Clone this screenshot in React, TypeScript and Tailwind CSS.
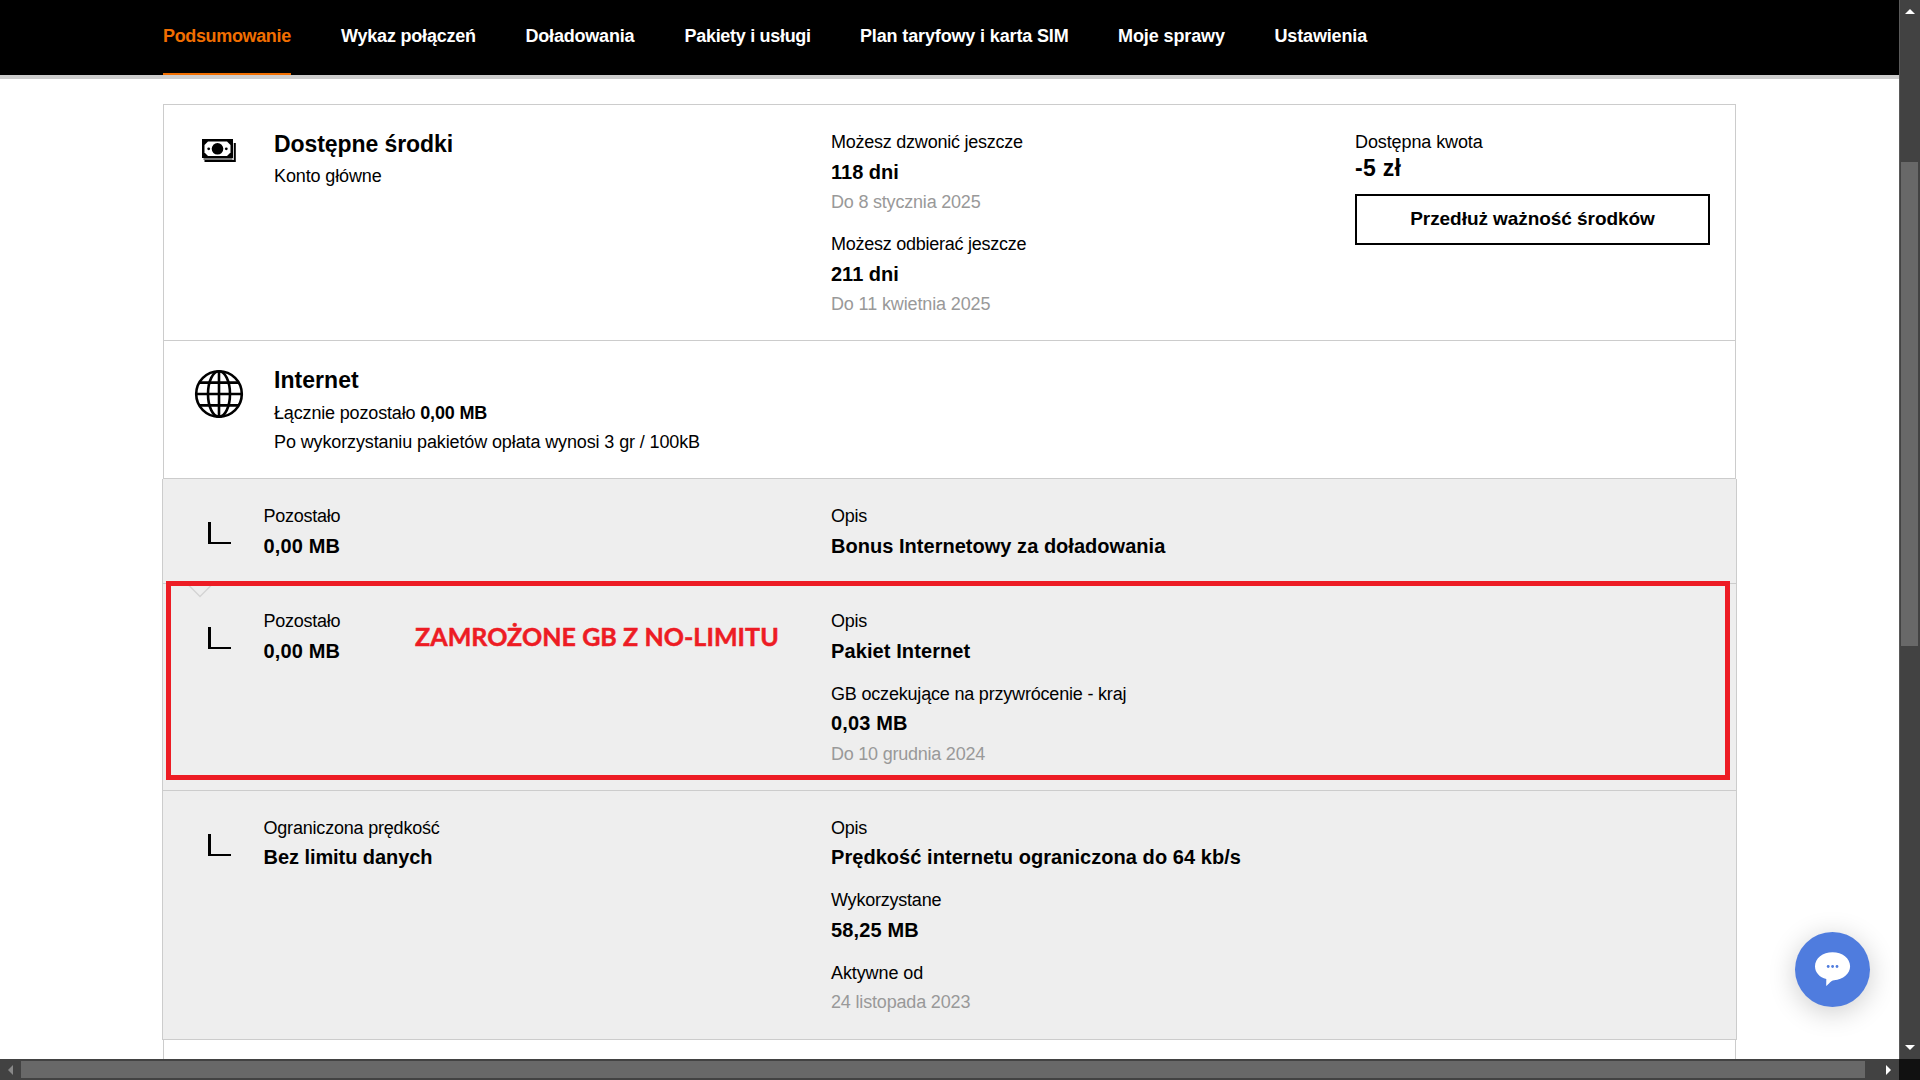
import type { ReactNode } from "react"

const navItems = [
  { label: "Podsumowanie", size: "w-[128px] tracking-[-0.35px]", active: true },
  { label: "Wykaz połączeń", size: "w-[134.5px] tracking-[-0.2px]" },
  { label: "Doładowania", size: "w-[109px] tracking-[-0.2px]" },
  { label: "Pakiety i usługi", size: "w-[125.5px] tracking-[-0.3px]" },
  { label: "Plan taryfowy i karta SIM", size: "w-[208px] tracking-[-0.14px]" },
  { label: "Moje sprawy", size: "w-[106.5px] tracking-[-0.1px]" },
  { label: "Ustawienia", size: "w-[93px] tracking-[-0.15px]" },
]

interface TextProps {
  children: ReactNode
  className?: string
}

function Label({ children, className = "tracking-[-0.24px]" }: TextProps) {
  return <p className={`text-[18px] leading-[30px] whitespace-nowrap ${className}`}>{children}</p>
}

function Value({ children, className = "" }: TextProps) {
  return <p className={`text-[20px] leading-[30px] font-bold whitespace-nowrap ${className}`}>{children}</p>
}

function DateLine({ children, className = "tracking-[-0.2px]" }: TextProps) {
  return <p className={`text-[18px] leading-[30px] whitespace-nowrap text-[#999] ${className}`}>{children}</p>
}

function Title({ children, className = "tracking-[-0.08px]" }: TextProps) {
  return <p className={`text-[23px] leading-[31px] font-bold whitespace-nowrap ${className}`}>{children}</p>
}

function MoneyIcon() {
  return (
    <svg width="34" height="24" viewBox="0 0 34 24" className="block">
      <path d="M32.8 4v18H2.5" fill="none" stroke="#000" strokeWidth="2" />
      <path d="M1.5 20h29" stroke="#777" strokeWidth="2" />
      <rect x="0" y="0" width="31" height="19" fill="#000" />
      <path d="M6 2.5h19l3.5 3.5v7.5l-3.5 3.5H6l-3.5-3.5V6z" fill="#fff" />
      <circle cx="15.5" cy="9.8" r="5.8" />
      <circle cx="6.7" cy="9.8" r="1.4" />
      <circle cx="24.3" cy="9.8" r="1.4" />
    </svg>
  )
}

function GlobeIcon() {
  return (
    <svg width="50" height="50" viewBox="0 0 50 50" fill="none" stroke="#000" strokeWidth="2.6" className="block">
      <circle cx="25" cy="25" r="22.8" />
      <ellipse cx="25" cy="25" rx="11" ry="22.8" />
      <path d="M25 2v46M2 25h46M5.5 13.6h39M5.5 36.4h39" />
    </svg>
  )
}

function CornerIcon() {
  return <div className="mt-[21px] ml-[45px] h-[22px] w-[23px] border-b-2 border-l-[3px] border-black" />
}

function PackageRow({ left, children, className = "" }: { left: ReactNode; children: ReactNode; className?: string }) {
  return (
    <div className={`-mx-[2px] flex border-x border-b border-[#ccc] bg-[#eee] pt-[22px] ${className}`}>
      <div className="w-[100.5px] shrink-0">
        <CornerIcon />
      </div>
      <div className="w-[567.5px] shrink-0">{left}</div>
      <div>{children}</div>
    </div>
  )
}

export default function App() {
  return (
    <div className="flex h-[1080px] w-[1920px] flex-col overflow-hidden bg-white font-['Liberation_Sans',Arial,sans-serif] text-black">
      <div className="flex h-[1059px]">
        <div className="relative w-[1899px] overflow-hidden">
          <nav className="flex h-[79px] gap-[50px] border-b-4 border-[#ccc] bg-black pl-[163px] text-[18px] font-bold">
            {navItems.map((item) => (
              <a
                key={item.label}
                className={`h-[75px] pt-[21px] leading-[30px] whitespace-nowrap ${item.size} ${
                  item.active ? "border-b-2 border-[#f16e00] text-[#f16e00]" : "text-white"
                }`}
              >
                {item.label}
              </a>
            ))}
          </nav>

          <main className="mt-[25px] ml-[163px] h-[1100px] w-[1573px] border border-[#ccc]">
            {/* Available funds */}
            <section className="flex h-[236px] border-b border-[#ccc] pt-[22px]">
              <div className="w-[110px] shrink-0 pt-[12px] pl-[38px]">
                <MoneyIcon />
              </div>
              <div className="w-[557px] shrink-0 pt-[2px]">
                <Title>Dostępne środki</Title>
                <Label className="mt-px tracking-[-0.12px]">Konto główne</Label>
              </div>
              <div className="w-[524px] shrink-0">
                <Label>Możesz dzwonić jeszcze</Label>
                <Value>118 dni</Value>
                <DateLine>Do 8 stycznia 2025</DateLine>
                <Label className="mt-[12px] tracking-[-0.25px]">Możesz odbierać jeszcze</Label>
                <Value>211 dni</Value>
                <DateLine className="tracking-[-0.13px]">Do 11 kwietnia 2025</DateLine>
              </div>
              <div className="w-[355px]">
                <Label className="tracking-[-0.1px]">Dostępna kwota</Label>
                <Title className="-mt-[4px] tracking-[0.3px]">-5 zł</Title>
                <button className="mt-[10px] h-[51px] w-full border-2 border-black text-[19px] font-bold tracking-[-0.06px] whitespace-nowrap">
                  Przedłuż ważność środków
                </button>
              </div>
            </section>

            {/* Internet */}
            <section className="flex h-[138px] border-b border-[#ccc] pt-[24px]">
              <div className="w-[110px] shrink-0 pt-[4px] pl-[30px]">
                <GlobeIcon />
              </div>
              <div>
                <Title className="tracking-[0.05px]">Internet</Title>
                <Label className="mt-[2px] tracking-[-0.16px]">
                  Łącznie pozostało <b>0,00 MB</b>
                </Label>
                <Label className="-mt-px tracking-[-0.12px]">Po wykorzystaniu pakietów opłata wynosi 3 gr / 100kB</Label>
              </div>
            </section>

            <PackageRow
              className="h-[105px]"
              left={
                <>
                  <Label>Pozostało</Label>
                  <Value className="tracking-[0.15px]">0,00 MB</Value>
                </>
              }
            >
              <Label>Opis</Label>
              <Value className="tracking-[0.03px]">Bonus Internetowy za doładowania</Value>
            </PackageRow>

            <div className="relative">
              <PackageRow
                className="h-[207px]"
                left={
                  <>
                    <Label>Pozostało</Label>
                    <Value className="tracking-[0.15px]">0,00 MB</Value>
                  </>
                }
              >
                <Label>Opis</Label>
                <Value className="tracking-[0.1px]">Pakiet Internet</Value>
                <Label className="mt-[13px] tracking-[-0.19px]">GB oczekujące na przywrócenie - kraj</Label>
                <Value className="-mt-px tracking-[0.15px]">0,03 MB</Value>
                <DateLine className="mt-px tracking-[-0.23px]">Do 10 grudnia 2024</DateLine>
              </PackageRow>

              {/* Red frame and note over the frozen package */}
              <svg width="28" height="15" viewBox="0 0 28 15" className="absolute -top-px left-[22px]">
                <path d="M.5 0L14 13.5 27.5 0" fill="none" stroke="#d4d4d4" strokeWidth="1.4" />
              </svg>
              <div className="absolute -top-[3px] left-[2px] h-[199px] w-[1564px] border-[5px] border-[#ed1c24]" />
              <p className="absolute top-[34px] left-[251px] font-[Lato] text-[25px] leading-[36px] font-bold tracking-[0.07px] whitespace-nowrap text-[#ed1c24] [-webkit-text-stroke:0.5px_#ed1c24]">
                ZAMROŻONE GB Z NO-LIMITU
              </p>
            </div>

            <PackageRow
              className="h-[249px]"
              left={
                <>
                  <Label className="tracking-[-0.2px]">Ograniczona prędkość</Label>
                  <Value className="-mt-px tracking-[-0.06px]">Bez limitu danych</Value>
                </>
              }
            >
              <Label>Opis</Label>
              <Value className="-mt-px tracking-[0.05px]">Prędkość internetu ograniczona do 64 kb/s</Value>
              <Label className="mt-[13px] tracking-[-0.22px]">Wykorzystane</Label>
              <Value className="tracking-[0.15px]">58,25 MB</Value>
              <Label className="mt-[13px] tracking-[-0.1px]">Aktywne od</Label>
              <DateLine className="-mt-px tracking-[-0.17px]">24 listopada 2023</DateLine>
            </PackageRow>
          </main>

          {/* Chat bubble */}
          <button className="absolute top-[932px] left-[1795px] h-[75px] w-[75px] rounded-full bg-[#4f7cde] shadow-[0_5px_28px_rgba(0,0,0,0.2)]">
            <svg width="75" height="75" viewBox="0 0 75 75" className="block">
              <path
                d="M37.5 20.3c9.8 0 17.6 6.1 17.6 14 0 7.5-7 13.3-16 13.9-3.5.3-5 3.8-7.9 5.8l.1-6.9C24.5 45.4 20 40.5 20 34.3c0-7.9 7.8-14 17.5-14z"
                fill="#fff"
              />
              <g fill="#4f7cde">
                <circle cx="33.2" cy="34.5" r="1.4" />
                <circle cx="37.6" cy="34.5" r="1.4" />
                <circle cx="42" cy="34.5" r="1.4" />
              </g>
            </svg>
          </button>
        </div>

        {/* Vertical scrollbar */}
        <div className="flex w-[21px] flex-col items-center border-l border-[#5a5a5a] bg-[#424242]">
          <svg width="10" height="5" viewBox="0 0 10 5" className="mt-[9px]">
            <path d="M0 5L5 0l5 5z" fill="#fff" />
          </svg>
          <div className="mt-[148px] mr-[1px] h-[484px] w-[17px] bg-[#686868]" />
          <svg width="10" height="5" viewBox="0 0 10 5" className="mt-auto mb-[9px]">
            <path d="M0 0h10L5 5z" fill="#fff" />
          </svg>
        </div>
      </div>

      {/* Horizontal scrollbar */}
      <div className="flex h-[21px] items-center bg-[#424242]">
        <svg width="5" height="10" viewBox="0 0 5 10" className="ml-[8px]">
          <path d="M5 0v10L0 5z" fill="#888" />
        </svg>
        <div className="ml-[8px] h-[17px] w-[1844px] bg-[#686868]" />
        <svg width="5" height="10" viewBox="0 0 5 10" className="ml-[21px]">
          <path d="M0 0v10l5-5z" fill="#fff" />
        </svg>
        <div className="ml-auto h-[21px] w-[21px] bg-[#111]" />
      </div>
    </div>
  )
}
